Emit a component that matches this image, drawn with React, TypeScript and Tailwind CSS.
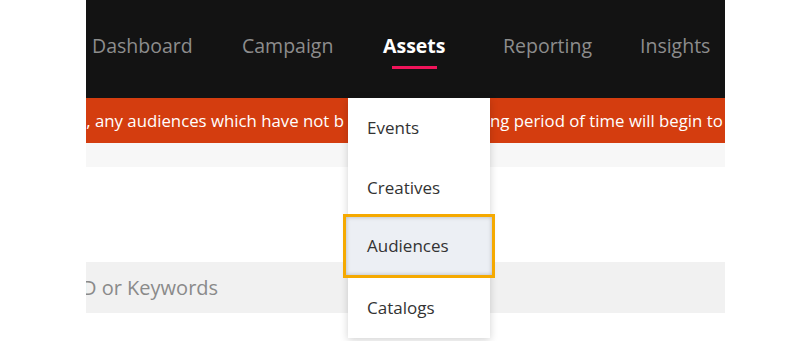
const navItems = [
  { label: 'Dashboard', width: 'w-[150px]' },
  { label: 'Campaign', width: 'w-[141px]' },
  { label: 'Assets', width: 'w-[120px]' },
  { label: 'Reporting', width: 'w-[137px]' },
  { label: 'Insights', width: 'w-[80px]' },
]
const menuItems = ['Events', 'Creatives', 'Audiences', 'Catalogs']

export default function App() {
  return (
    <div className="relative h-[341px] w-[806px] overflow-hidden bg-white font-['Open_Sans',sans-serif]">
      <div className="ml-[86px] w-[639px]">
        <header className="flex h-[98px] items-start bg-[#131313] pl-[6px] pt-[32px]">
          <nav className="flex">
            {navItems.map(({ label, width }) => (
              <div key={label} className={`${width} flex shrink-0`}>
                <div className="flex flex-col items-center">
                  <span
                    className={
                      label === 'Assets'
                        ? 'text-[19.5px] leading-[27px] font-bold text-white'
                        : 'text-[19.5px] leading-[27px] text-[#8d8d8d]'
                    }
                  >
                    {label}
                  </span>
                  {label === 'Assets' && <span className="mt-[7px] h-[3px] w-[45px] bg-[#f0145a]" />}
                </div>
              </div>
            ))}
          </nav>
        </header>

        <div className="flex h-[45px] items-center overflow-hidden bg-[#d43d0f] text-[16.8px] font-medium text-white">
          <div className="w-[262px] shrink-0 overflow-hidden whitespace-nowrap">
            <span className="ml-[-4px]">l, any audiences which have not b</span>
          </div>
          <span className="ml-[142px] whitespace-nowrap">ng period of time will begin to expire</span>
        </div>
        <div className="h-[24px] bg-[#f7f7f7]" />

        <div className="mt-[95px] flex h-[51px] items-center overflow-hidden bg-[#f1f1f1]">
          <span className="ml-[-4px] whitespace-nowrap text-[20px] text-[#8a8a8a]">D or Keywords</span>
        </div>
      </div>

      <div className="absolute left-[348px] top-[98px] w-[142px] bg-white shadow-[0_2px_8px_rgba(0,0,0,0.18)]">
        {menuItems.map((item) =>
          item === 'Audiences' ? (
            <div
              key={item}
              className="relative -mx-[5px] -mt-[4px] flex h-[64px] items-center border-[3px] border-[#f5a900] bg-[#eceff4] pl-[21px] text-[17px] text-[#333] shadow-[inset_0_0_4px_rgba(0,0,0,0.25)]"
            >
              {item}
            </div>
          ) : (
            <div key={item} className="flex h-[60px] items-center pl-[19px] text-[17px] text-[#333]">
              {item}
            </div>
          ),
        )}
      </div>
    </div>
  )
}
